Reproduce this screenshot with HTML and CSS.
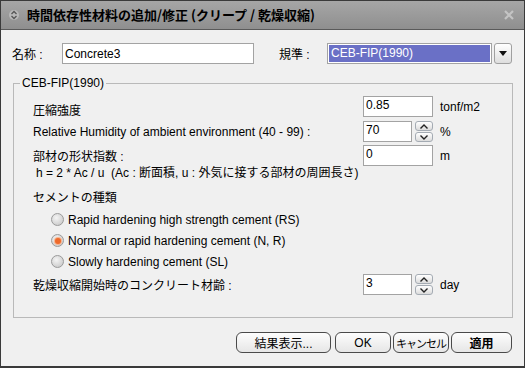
FILE: index.html
```html
<!DOCTYPE html>
<html lang="ja">
<head>
    <meta charset="UTF-8">
    <title>時間依存性材料の追加/修正</title>
    <link rel="stylesheet" href="styles.css">
</head>
<body>
    <div class="dialog">
        <div class="titlebar">
            <svg class="title-icon" width="10" height="12" viewBox="0 0 10 12">
                <circle cx="5" cy="6" r="5" fill="#b9b9b9"/>
                <polyline points="2.5,5 5,2.5 7.5,5" fill="none" stroke="#555" stroke-width="1.3"/>
                <polyline points="2.5,7 5,9.5 7.5,7" fill="none" stroke="#555" stroke-width="1.3"/>
            </svg>
            <span class="title">時間依存性材料の追加/修正 (クリープ / 乾燥収縮)</span>
            <svg class="close-icon" width="12" height="12" viewBox="0 0 12 12">
                <path d="M2 2 L10 10 M10 2 L2 10" stroke="#c4c4c4" stroke-width="2.2"/>
            </svg>
        </div>

        <div class="content">
            <div class="top-row">
                <span class="lbl-name">名称 :</span>
                <input type="text" class="txt name-input" value="Concrete3">
                <span class="lbl-code">規準 :</span>
                <div class="combo">
                    <span class="combo-text">CEB-FIP(1990)</span>
                    <span class="combo-btn">
                        <svg width="8" height="5" viewBox="0 0 8 5"><polygon points="0,0 8,0 4,5" fill="#111"/></svg>
                    </span>
                </div>
            </div>

            <fieldset class="group">
                <legend>CEB-FIP(1990)</legend>
                <div class="group-body">
                    <div class="row row-first">
                        <span class="label label-low">圧縮強度</span>
                        <div class="field"><input type="text" class="txt num" value="0.85"></div>
                        <span class="unit">tonf/m2</span>
                    </div>
                    <div class="row row-second">
                        <span class="label">Relative Humidity of ambient environment (40 - 99) :</span>
                        <div class="field">
                            <input type="text" class="txt num spin-input" value="70">
                            <div class="spin">
                                <span class="spin-btn"><svg width="8" height="5" viewBox="0 0 8 5"><polyline points="0.5,4.5 4,1 7.5,4.5" fill="none" stroke="#222" stroke-width="1.4"/></svg></span>
                                <span class="spin-btn"><svg width="8" height="5" viewBox="0 0 8 5"><polyline points="0.5,0.5 4,4 7.5,0.5" fill="none" stroke="#222" stroke-width="1.4"/></svg></span>
                            </div>
                        </div>
                        <span class="unit">%</span>
                    </div>
                    <div class="row row-third">
                        <span class="label">部材の形状指数 :</span>
                        <div class="field"><input type="text" class="txt num" value="0"></div>
                        <span class="unit">m</span>
                    </div>
                    <p class="formula">h = 2 * Ac / u &nbsp;(Ac : 断面積, u : 外気に接する部材の周囲長さ)</p>
                    <p class="section">セメントの種類</p>
                    <div class="radios">
                        <div class="radio-item"><span class="radio"></span>Rapid hardening high strength cement (RS)</div>
                        <div class="radio-item"><span class="radio checked"></span>Normal or rapid hardening cement (N, R)</div>
                        <div class="radio-item"><span class="radio"></span>Slowly hardening cement (SL)</div>
                    </div>
                    <div class="row row-last">
                        <span class="label">乾燥収縮開始時のコンクリート材齢 :</span>
                        <div class="field">
                            <input type="text" class="txt num spin-input" value="3">
                            <div class="spin">
                                <span class="spin-btn"><svg width="8" height="5" viewBox="0 0 8 5"><polyline points="0.5,4.5 4,1 7.5,4.5" fill="none" stroke="#222" stroke-width="1.4"/></svg></span>
                                <span class="spin-btn"><svg width="8" height="5" viewBox="0 0 8 5"><polyline points="0.5,0.5 4,4 7.5,0.5" fill="none" stroke="#222" stroke-width="1.4"/></svg></span>
                            </div>
                        </div>
                        <span class="unit">day</span>
                    </div>
                </div>
            </fieldset>

            <div class="buttons">
                <button class="btn btn-result">結果表示...</button>
                <button class="btn btn-ok">OK</button>
                <button class="btn btn-cancel">キャンセル</button>
                <button class="btn btn-apply">適用</button>
            </div>
        </div>
    </div>
</body>
</html>
```

FILE: styles.css
```css
* {
    margin: 0;
    padding: 0;
    box-sizing: border-box;
}
body {
    font-family: "Liberation Sans", "Noto Sans CJK JP", sans-serif;
    font-size: 12px;
    color: #000;
    background: #f0f0f0;
}
.dialog {
    width: 525px;
    height: 368px;
    border: 1px solid #3a3a3a;
    border-bottom-width: 2px;
    background: #f0f0f0;
    display: flex;
    flex-direction: column;
}
.titlebar {
    height: 29px;
    display: flex;
    align-items: center;
    padding: 0 9px 0 8px;
    background: linear-gradient(to bottom, #a6a6a6, #8f8f8f);
    border-bottom: 1px solid #5a5a5a;
}
.title-icon {
    flex: none;
}
.title {
    margin-left: 8px;
    font-family: "Noto Sans CJK JP", sans-serif;
    font-weight: bold;
    font-size: 13px;
    line-height: 16px;
    flex: 1;
}
.close-icon {
    flex: none;
}
.content {
    flex: 1;
    display: flex;
    flex-direction: column;
}
.top-row {
    display: flex;
    align-items: center;
    height: 21px;
    margin-top: 13px;
    padding-left: 11px;
}
.lbl-name {
    width: 50px;
}
.lbl-code {
    width: 48px;
    margin-left: 25px;
}
.txt {
    font-family: "Liberation Sans", "Noto Sans CJK JP", sans-serif;
    font-size: 12px;
    color: #000;
    background: #fff;
    border: 1px solid #a3a3a3;
    height: 21px;
    padding: 0 2px;
    outline: none;
}
.name-input {
    width: 192px;
}
.combo {
    width: 185px;
    height: 21px;
    display: flex;
    align-items: stretch;
    gap: 2px;
}
.combo-text {
    flex: 1;
    background: #6a70c6;
    color: #fff;
    border: 1px solid #a3a3a3;
    box-shadow: inset 0 0 0 1px #fff;
    padding: 1px 3px 0;
    line-height: 17px;
}
.combo-btn {
    width: 18px;
    border: 1px solid #a0a0a0;
    border-radius: 3px;
    background: linear-gradient(to bottom, #ffffff, #dedede);
    display: flex;
    align-items: center;
    justify-content: center;
}
.group {
    margin: 12px 11px 0 12px;
    border: 1px solid #b9b9b9;
    padding: 6px 6px 22px 6px;
}
.group legend {
    padding: 0 2px;
    line-height: 14px;
}
.group-body {
    padding-left: 13px;
}
.row {
    display: flex;
    align-items: center;
    height: 21px;
}
.row-second {
    margin-top: 4px;
}
.row-third {
    margin-top: 3px;
}
.row-last {
    margin-top: 2px;
}
.label {
    flex: 1;
}
.label-low {
    padding-top: 6px;
}
.field {
    width: 70px;
    display: flex;
    gap: 3px;
    height: 21px;
}
.num {
    width: 70px;
    padding-bottom: 3px;
}
.spin-input {
    width: 49px;
}
.spin {
    width: 18px;
    display: flex;
    flex-direction: column;
    gap: 1px;
}
.spin-btn {
    height: 10px;
    border: 1px solid #a4abb3;
    border-radius: 3px;
    background: linear-gradient(to bottom, #ffffff, #dcdcdc);
    display: flex;
    align-items: center;
    justify-content: center;
}
.unit {
    width: 66px;
    margin-left: 7px;
}
.formula {
    margin-left: 3px;
    line-height: 14px;
}
.section {
    margin-top: 11px;
    line-height: 14px;
}
.radios {
    margin-top: 4px;
    padding-left: 18px;
}
.radio-item {
    height: 21px;
    display: flex;
    align-items: center;
}
.radio {
    width: 13px;
    height: 13px;
    border-radius: 50%;
    border: 1px solid #9a9a9a;
    background: radial-gradient(circle at 40% 35%, #f4f4f4, #c2c2c2);
    margin-right: 4px;
    display: flex;
    align-items: center;
    justify-content: center;
}
.radio.checked::after {
    content: "";
    width: 6px;
    height: 6px;
    border-radius: 50%;
    background: #ee6a2c;
    box-shadow: 0 0 0 1px #f7b48f;
}
.buttons {
    display: flex;
    justify-content: flex-end;
    gap: 2px;
    margin-top: 14px;
    padding-right: 12px;
}
.btn {
    height: 21px;
    border: 1px solid #4a4a4a;
    border-radius: 6px;
    background: linear-gradient(to bottom, #fdfdfd, #e6e6e6);
    font-family: "Liberation Sans", "Noto Sans CJK JP", sans-serif;
    font-size: 12px;
    color: #000;
    white-space: nowrap;
}
.btn-result {
    width: 95px;
    margin-right: 2px;
}
.btn-ok {
    width: 56px;
}
.btn-cancel {
    width: 56px;
    font-size: 11px;
    letter-spacing: -1px;
}
.btn-apply {
    width: 61px;
    font-weight: bold;
    font-family: "Noto Sans CJK JP", sans-serif;
}
```
